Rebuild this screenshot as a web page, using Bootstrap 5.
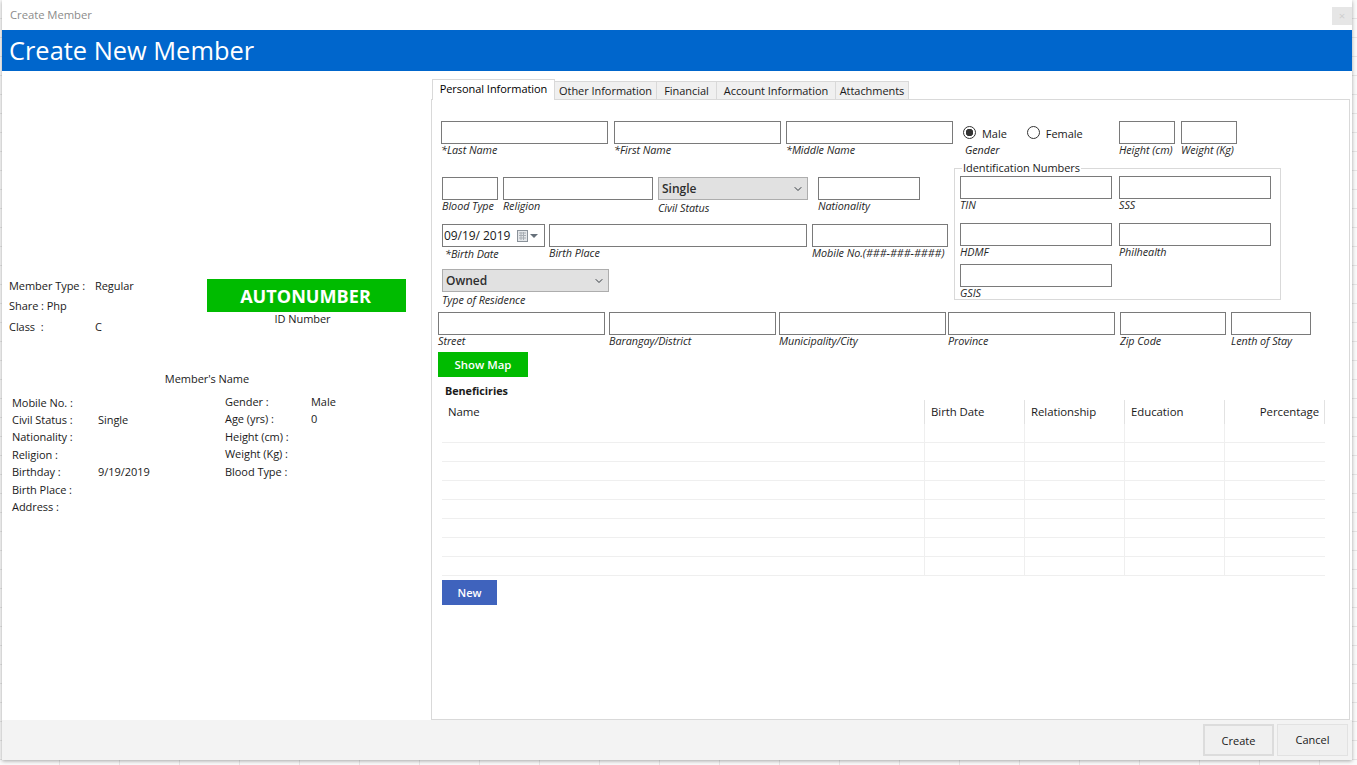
<!DOCTYPE html>
<html lang="en">
<head>
<meta charset="utf-8">
<title>Create Member</title>
<link href="https://cdn.jsdelivr.net/npm/bootstrap@5.3.0/dist/css/bootstrap.min.css" rel="stylesheet">
<style>
html,body{height:765px;overflow:hidden}
body{margin:0;font-family:"Open Sans","Noto Sans",sans-serif;font-size:11px;letter-spacing:-.05px;color:#1a1a1a;
 background-color:#fbfbfb;
 background-image:repeating-linear-gradient(to bottom,transparent 0 18px,#e6e6e6 18px 19px),repeating-linear-gradient(to right,transparent 0 59px,#e6e6e6 59px 60px)}
.win{margin-left:2px;width:1350px;height:760px;background:#fff;box-shadow:0 1px 4px rgba(0,0,0,.35)}
.title-bar{height:30px;padding-left:8px;color:#8c8c8c;font-size:11.3px;padding-top:7px;line-height:16px}
.close-x{width:20px;height:18px;background:#e6e6e6;color:#cfcfcf;line-height:17px;margin-top:0;text-align:center}
.head-bar{height:41px;background:#0066cc;color:#fff;font-size:25.4px;line-height:41px;padding-left:7px;letter-spacing:0}
.main{height:649px}
.left-pane{width:429px}
.info-wrap{margin-top:205px;padding-left:7px}
.info-col{width:198px}
.info-line{height:20px;line-height:20px;display:grid;grid-template-columns:86px auto}
.info-line+.info-line+.info-line{margin-top:1px}
.auto-col{width:199px;margin-top:3px}
.auto-box{height:33px;background:#00bb00;color:#fff;font-weight:700;font-size:18.1px;line-height:35px;text-align:center;letter-spacing:0;padding-right:2px}
.auto-cap{text-align:center;line-height:14px;padding-right:8px}
.member-name{width:410px;text-align:center;line-height:16px;margin-top:34px}
.kv-wrap{margin-top:6px;padding-left:10px}
.kv-a{width:213px;margin-top:.6px}
.kv-line{height:17.4px;line-height:17.4px;display:grid;grid-template-columns:86px auto}
.right-pane{width:919px;padding-top:8px}
.tab-strip{height:21px;padding-left:1px;margin:0;border:0;align-items:flex-end;flex-wrap:nowrap}
.tab-strip .nav-link{height:19px;padding:0;border:1px solid #d9d9d9;border-left:0;border-radius:0;background:#f0f0f0;color:#1a1a1a;text-align:center;line-height:18px;margin:0;font-size:11px}
.tab-strip .nav-link.active{height:21px;background:#fff;border:1px solid #d9d9d9;border-bottom:0;line-height:18px;position:relative;z-index:1}
.t1{width:123px}.t2{width:102px}.t3{width:60px}.t4{width:119px}.t5{width:73px}
.tab-body{height:621px;border:1px solid #d9d9d9;margin-top:-1px;padding-left:6px}
.upper{padding-left:3px;padding-top:21px}
.up-left{width:513px}
.in-row{display:flex}
.ml1{margin-left:1px}
.fld{flex:none}
.fld .form-control,.fld .form-select,.date-box{display:block;height:23px;min-height:0;border:1px solid #7a7a7a;border-radius:0;padding:0 3px;font-size:12px;line-height:21px;color:#1a1a1a;box-shadow:none}
.fld .form-select{background-color:#e1e1e1;border-color:#adadad;padding:0 20px 0 3px;font-weight:600;color:#2e2e2e;background-size:10px 8px;background-position:right 4px center}
.fld label{display:block;font-style:italic;line-height:12px;height:12px;color:#262626;white-space:nowrap;font-size:10.8px}
.lab2 label{margin-top:2px}
.lab1 label{margin-top:1px;padding-left:3px}
.w167{width:167px}.w56{width:56px}.w150{width:150px}.w102{width:102px}.w103{width:103px}.w258{width:258px}.w136{width:136px}.w152{width:152px}.w106{width:106px}.w80{width:80px}
.g4{margin-left:4px}.g5{margin-left:5px}.g6{margin-left:6px}.g7{margin-left:7px}.g9{margin-left:9px}.g10{margin-left:10px}.g3{margin-left:3px}.g2{margin-left:2px}
.mt21{margin-top:21px}.mt12{margin-top:12px}.mt10{margin-top:10px}.mt9{margin-top:9px}.mt6{margin-top:6px}
.date-box{display:flex;align-items:center;justify-content:space-between;padding:0 5px 0 1px}
.gender-box{width:156px;padding-left:9px}
.radio-row{height:23px;display:flex;align-items:center}
.radio-row .form-check-input{width:13px;height:13px;margin:0;border:1px solid #333;background-image:none;background-color:#fff;flex:none}
.radio-row .form-check-input:checked{background-image:radial-gradient(circle,#333 0 3.5px,transparent 4px);background-color:#fff;border-color:#333}
.radio-row label{margin-left:6px;line-height:14px;padding-top:2px}
.radio-row .form-check-input.female{margin-left:20px}
.gender-cap{font-style:italic;line-height:12px;padding-left:2px;font-size:10.8px}
.id-box{position:relative;width:327px;height:132px;border:1px solid #d9d9d9;margin-top:12px;padding:7px 0 0 5px}
.id-legend{position:absolute;left:7px;top:-8px;background:#fff;padding:0 1px;line-height:13px;margin:0}
.addr-row{margin-top:6px}
.show-map{display:block;width:90px;height:25px;border:0;border-radius:0;padding:0;background:#00bb00;color:#fff;font-size:11.4px;font-weight:600;margin-top:5px;line-height:25px}
.ben-title{font-weight:700;line-height:14px;margin:7px 0 0 7px;font-size:10.8px}
.ben-grid.table{width:883px;margin:2px 0 0 4px;table-layout:fixed;border-collapse:separate;border-spacing:0;color:#1a1a1a;--bs-table-bg:transparent}
.ben-grid.table>:not(caption)>*>*{padding:0;box-shadow:none;border:0;border-right:1px solid #efefef;border-bottom:1px solid #efefef;height:19px;font-weight:400;color:#1a1a1a}
.ben-grid.table>tbody>tr>td:last-child{border-right:0}
.ben-grid.table>thead>tr>th{height:24px;border-bottom:0;line-height:23px;padding-left:6px;padding-top:0;vertical-align:top;font-size:11.4px;border-right-color:#e2e2e2}
.ben-grid.table>thead>tr>th.name-h{padding-left:6px}
.ben-grid.table>thead>tr>th.pct-h{text-align:right;padding-right:5px}
.new-btn{display:block;width:55px;height:25px;margin:4px 0 0 4px;border:0;border-radius:0;padding:0;background:#3f63bd;color:#fff;font-weight:600;font-size:11px;line-height:25px}
.foot-bar{height:40px;background:#f3f3f3;padding:4px 4px 0 0;justify-content:flex-end}
.foot-btn{width:71px;height:32px;padding:0;border-radius:0;background:#f0f0f0;border:1px solid #e2e2e2;color:#1a1a1a;font-size:11px;line-height:30px}
.foot-btn.pri{border:2px solid #dcdcdc;margin-right:3px}
</style>
</head>
<body>
<div class="win d-flex flex-column">
  <div class="title-bar d-flex justify-content-between">
    <span>Create Member</span>
    <div class="close-x">×</div>
  </div>
  <div class="head-bar">Create New Member</div>
  <div class="main d-flex">
    <div class="left-pane">
      <div class="info-wrap d-flex">
        <div class="info-col">
          <div class="info-line"><span>Member Type :</span><span>Regular</span></div>
          <div class="info-line"><span>Share : Php</span><span></span></div>
          <div class="info-line"><span>Class &nbsp;:</span><span>C</span></div>
        </div>
        <div class="auto-col">
          <div class="auto-box">AUTONUMBER</div>
          <div class="auto-cap">ID Number</div>
        </div>
      </div>
      <div class="member-name">Member's Name</div>
      <div class="kv-wrap d-flex">
        <div class="kv-a">
          <div class="kv-line"><span>Mobile No. :</span><span></span></div>
          <div class="kv-line"><span>Civil Status :</span><span>Single</span></div>
          <div class="kv-line"><span>Nationality :</span><span></span></div>
          <div class="kv-line"><span>Religion :</span><span></span></div>
          <div class="kv-line"><span>Birthday :</span><span>9/19/2019</span></div>
          <div class="kv-line"><span>Birth Place :</span><span></span></div>
          <div class="kv-line"><span>Address :</span><span></span></div>
        </div>
        <div class="kv-b">
          <div class="kv-line"><span>Gender :</span><span>Male</span></div>
          <div class="kv-line"><span>Age (yrs) :</span><span>0</span></div>
          <div class="kv-line"><span>Height (cm) :</span><span></span></div>
          <div class="kv-line"><span>Weight (Kg) :</span><span></span></div>
          <div class="kv-line"><span>Blood Type :</span><span></span></div>
        </div>
      </div>
    </div>
    <div class="right-pane">
      <ul class="nav nav-tabs tab-strip">
        <li class="nav-item"><a class="nav-link active t1" href="#">Personal Information</a></li>
        <li class="nav-item"><a class="nav-link t2" href="#">Other Information</a></li>
        <li class="nav-item"><a class="nav-link t3" href="#">Financial</a></li>
        <li class="nav-item"><a class="nav-link t4" href="#">Account Information</a></li>
        <li class="nav-item"><a class="nav-link t5" href="#">Attachments</a></li>
      </ul>
      <div class="tab-body">
        <div class="upper d-flex">
          <div class="up-left">
            <div class="in-row">
              <div class="fld w167"><input class="form-control" type="text"><label>*Last Name</label></div>
              <div class="fld w167 g6"><input class="form-control" type="text"><label>*First Name</label></div>
              <div class="fld w167 g5"><input class="form-control" type="text"><label>*Middle Name</label></div>
            </div>
            <div class="in-row ml1 mt21">
              <div class="fld w56"><input class="form-control" type="text"><label>Blood Type</label></div>
              <div class="fld w150 g5"><input class="form-control" type="text"><label>Religion</label></div>
              <div class="fld w150 g5 lab2"><select class="form-select"><option>Single</option></select><label>Civil Status</label></div>
              <div class="fld w102 g10"><input class="form-control" type="text"><label>Nationality</label></div>
            </div>
            <div class="in-row ml1 mt10">
              <div class="fld w103 lab1">
                <div class="date-box"><span>09/19/ 2019</span>
                  <svg width="22" height="12" viewBox="0 0 22 12" aria-hidden="true"><rect x="0.5" y="0.5" width="10" height="11" fill="#e4e7ea" stroke="#8a929a"/><path d="M2 3h7M2 5.500h7M2 8h7M4 2v8M6.500 2v8" stroke="#a8aeb4" stroke-width="1" fill="none"/><path d="M13 4h8l-4 4z" fill="#66707a"/></svg>
                </div>
                <label>*Birth Date</label>
              </div>
              <div class="fld w258 g4"><input class="form-control" type="text"><label>Birth Place</label></div>
              <div class="fld w136 g5"><input class="form-control" type="text"><label>Mobile No.(###-###-####)</label></div>
            </div>
            <div class="in-row ml1 mt9">
              <div class="fld w167 lab2"><select class="form-select"><option>Owned</option></select><label>Type of Residence</label></div>
            </div>
          </div>
          <div class="up-right">
            <div class="d-flex">
              <div class="gender-box">
                <div class="radio-row">
                  <input class="form-check-input" type="radio" name="gender" id="gm" checked><label for="gm">Male</label>
                  <input class="form-check-input female" type="radio" name="gender" id="gf"><label for="gf">Female</label>
                </div>
                <div class="gender-cap">Gender</div>
              </div>
              <div class="fld w56 g9"><input class="form-control" type="text"><label>Height (cm)</label></div>
              <div class="fld w56 g6"><input class="form-control" type="text"><label>Weight (Kg)</label></div>
            </div>
            <div class="id-box">
              <div class="id-legend">Identification Numbers</div>
              <div class="in-row">
                <div class="fld w152"><input class="form-control" type="text"><label>TIN</label></div>
                <div class="fld w152 g7"><input class="form-control" type="text"><label>SSS</label></div>
              </div>
              <div class="in-row mt12">
                <div class="fld w152"><input class="form-control" type="text"><label>HDMF</label></div>
                <div class="fld w152 g7"><input class="form-control" type="text"><label>Philhealth</label></div>
              </div>
              <div class="in-row mt6">
                <div class="fld w152"><input class="form-control" type="text"><label>GSIS</label></div>
              </div>
            </div>
          </div>
        </div>
        <div class="in-row addr-row">
          <div class="fld w167"><input class="form-control" type="text"><label>Street</label></div>
          <div class="fld w167 g4"><input class="form-control" type="text"><label>Barangay/District</label></div>
          <div class="fld w167 g3"><input class="form-control" type="text"><label>Municipality/City</label></div>
          <div class="fld w167 g2"><input class="form-control" type="text"><label>Province</label></div>
          <div class="fld w106 g5"><input class="form-control" type="text"><label>Zip Code</label></div>
          <div class="fld w80 g5"><input class="form-control" type="text"><label>Lenth of Stay</label></div>
        </div>
        <button class="btn show-map" type="button">Show Map</button>
        <div class="ben-title">Beneficiries</div>
        <table class="table ben-grid">
          <colgroup><col style="width:483px"><col style="width:100px"><col style="width:100px"><col style="width:100px"><col style="width:100px"></colgroup>
          <thead><tr><th class="name-h">Name</th><th>Birth Date</th><th>Relationship</th><th>Education</th><th class="pct-h">Percentage</th></tr></thead>
          <tbody>
            <tr><td></td><td></td><td></td><td></td><td></td></tr>
            <tr><td></td><td></td><td></td><td></td><td></td></tr>
            <tr><td></td><td></td><td></td><td></td><td></td></tr>
            <tr><td></td><td></td><td></td><td></td><td></td></tr>
            <tr><td></td><td></td><td></td><td></td><td></td></tr>
            <tr><td></td><td></td><td></td><td></td><td></td></tr>
            <tr><td></td><td></td><td></td><td></td><td></td></tr>
            <tr><td></td><td></td><td></td><td></td><td></td></tr>
          </tbody>
        </table>
        <button class="btn new-btn" type="button">New</button>
      </div>
    </div>
  </div>
  <div class="foot-bar d-flex">
    <button class="btn foot-btn pri" type="button">Create</button>
    <button class="btn foot-btn" type="button">Cancel</button>
  </div>
</div>
<script src="https://cdn.jsdelivr.net/npm/bootstrap@5.3.0/dist/js/bootstrap.bundle.min.js"></script>
</body>
</html>
